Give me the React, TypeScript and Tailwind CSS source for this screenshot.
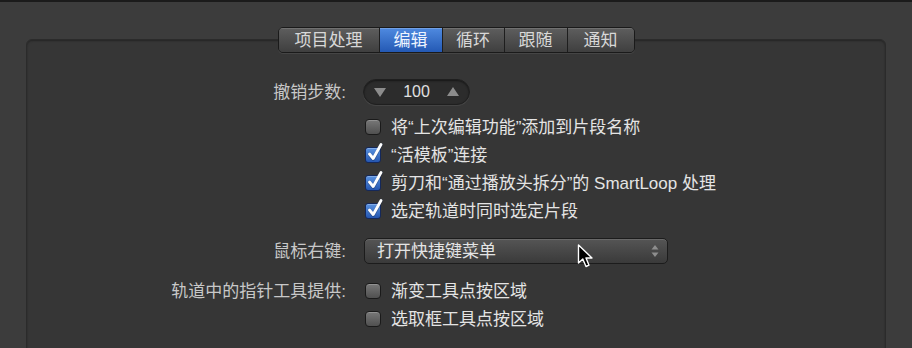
import React from "react";

const font = { fontFamily: '"Liberation Sans", "Noto Sans CJK SC", sans-serif' };

function Check({ checked }: { checked: boolean }) {
  if (!checked) {
    return (
      <div className="relative w-[16px] h-[16px] shrink-0 rounded-[4px] border border-[#1a1a1a] bg-gradient-to-b from-[#787878] to-[#505050] shadow-[inset_0_1px_0_rgba(255,255,255,0.2)]" />
    );
  }
  return (
    <div className="relative w-[16px] h-[16px] shrink-0 rounded-[3px] border border-[#14285a] bg-gradient-to-b from-[#5b93e0] to-[#2556b0] shadow-[inset_0_1px_0_rgba(255,255,255,0.25)]">
      <svg className="absolute left-[1px] top-[-5px]" width="16" height="19" viewBox="0 0 16 19">
        <path d="M2.5 11.5 L6.2 16 L14.5 1.5" fill="none" stroke="#1a2a4a" strokeWidth="3.6" strokeLinecap="round" strokeLinejoin="round" opacity="0.35" />
        <path d="M2.5 11 L6.2 15.5 L14 1.5" fill="none" stroke="#ffffff" strokeWidth="2.8" strokeLinecap="round" strokeLinejoin="round" />
      </svg>
    </div>
  );
}

function Row({ label, children, h }: { label?: string; children: React.ReactNode; h: string }) {
  return (
    <div className={`flex items-center ${h}`}>
      <div className="w-[319px] text-right text-[#c8c8c8]">{label}</div>
      <div className="ml-[18px] flex items-center">{children}</div>
    </div>
  );
}

function CheckRow({ label, text, checked }: { label?: string; text: string; checked: boolean }) {
  return (
    <div className="flex items-center h-[28px]">
      <div className="w-[319px] text-right text-[#c8c8c8]">{label}</div>
      <div className="ml-[19px] flex items-center">
        <Check checked={checked} />
        <span className="ml-[10px] text-[#e4e4e4] whitespace-nowrap">{text}</span>
      </div>
    </div>
  );
}

export default function App() {
  const tabs = [
    { t: "项目处理", w: "w-[100px]" },
    { t: "编辑", w: "w-[63px]", active: true },
    { t: "循环", w: "w-[62px]" },
    { t: "跟随", w: "w-[63px]" },
    { t: "通知", w: "w-[67px]" },
  ];
  return (
    <div className="relative w-[912px] h-[348px] overflow-hidden bg-[#3c3c3c] text-[17px] leading-none" style={font}>
      <div className="h-[2px] bg-[#1b1b1b]" />
      <div className="relative z-10 mt-[25px] flex justify-center">
        <div className="flex h-[26px] rounded-[5px] border border-[#1a1a1a] overflow-hidden shadow-[0_1px_0_rgba(255,255,255,0.08)]">
          {tabs.map((tab, i) => (
            <div
              key={tab.t}
              className={`${tab.w} flex items-center justify-center ${i > 0 ? "border-l border-[#1e1e1e]" : ""} ${
                tab.active
                  ? "bg-gradient-to-b from-[#4f8ae0] to-[#2459b4] text-[#eef4ff] shadow-[inset_0_1px_0_rgba(255,255,255,0.2)]"
                  : "bg-gradient-to-b from-[#5e5e5e] to-[#3f3f3f] text-[#d8d8d8] shadow-[inset_0_1px_0_rgba(255,255,255,0.12)]"
              }`}
            >
              {tab.t}
            </div>
          ))}
        </div>
      </div>
      <div className="relative mx-[26px] mt-[-14px] h-[400px] rounded-t-[6px] border border-[#2b2b2b] bg-[#363636] shadow-[inset_0_1px_2px_rgba(0,0,0,0.35)] pt-[39px]">
        <Row label="撤销步数:" h="h-[26px]">
          <div className="w-[107px] h-[26px] rounded-full border border-[#1f1f1f] bg-[#2c2c2c] shadow-[inset_0_1px_2px_rgba(0,0,0,0.5),0_1px_0_rgba(255,255,255,0.07)] flex items-center justify-between px-[10px] ml-[-1px]">
            <svg width="12" height="10" viewBox="0 0 12 10"><path d="M0 1 L12 1 L6 10 Z" fill="#8c8c8c" /></svg>
            <span className="text-[#e0e0e0] text-[16px]">100</span>
            <svg width="12" height="10" viewBox="0 0 12 10"><path d="M0 9 L12 9 L6 0 Z" fill="#8c8c8c" /></svg>
          </div>
        </Row>
        <div className="mt-[8px]">
          <CheckRow text="将“上次编辑功能”添加到片段名称" checked={false} />
          <CheckRow text="“活模板”连接" checked />
          <CheckRow text="剪刀和“通过播放头拆分”的 SmartLoop 处理" checked />
          <CheckRow text="选定轨道时同时选定片段" checked />
        </div>
        <div className="mt-[13px]">
          <Row label="鼠标右键:" h="h-[26px]">
            <div className="w-[304px] h-[26px] rounded-[5px] border border-[#1c1c1c] bg-gradient-to-b from-[#555555] to-[#3a3a3a] shadow-[inset_0_1px_0_rgba(255,255,255,0.12)] flex items-center justify-between pl-[12px] pr-[8px]">
              <span className="text-[#e4e4e4]">打开快捷键菜单</span>
              <svg width="8" height="14" viewBox="0 0 8 14">
                <path d="M0.5 5.5 L7.5 5.5 L4 1 Z" fill="#8e8e8e" />
                <path d="M0.5 8.5 L7.5 8.5 L4 13 Z" fill="#8e8e8e" />
              </svg>
            </div>
          </Row>
        </div>
        <div className="mt-[13px]">
          <CheckRow label="轨道中的指针工具提供:" text="渐变工具点按区域" checked={false} />
          <CheckRow text="选取框工具点按区域" checked={false} />
        </div>
      </div>
      <svg className="absolute left-[577px] top-[244px]" width="18" height="26" viewBox="0 0 18 26">
        <path d="M1.5 1 L1.5 19 L5.8 15 L9 22.5 L12 21.2 L9 14 L15 14 Z" fill="#000" stroke="#fff" strokeWidth="1.4" strokeLinejoin="round" />
      </svg>
    </div>
  );
}
